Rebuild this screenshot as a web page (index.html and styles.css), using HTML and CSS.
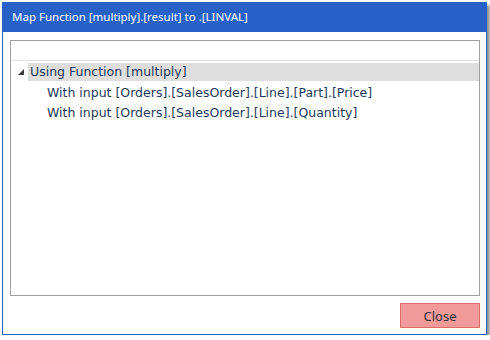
FILE: index.html
```html
<!DOCTYPE html>
<html lang="en">
<head>
    <meta charset="UTF-8">
    <title>Map Function</title>
    <link rel="stylesheet" href="styles.css">
</head>
<body>
<div class="window">
    <div class="titlebar">Map Function [multiply].[result] to .[LINVAL]</div>
    <div class="body">
        <div class="panel">
            <div class="panel-head"></div>
            <ul class="tree">
                <li class="node selected">
                    <span class="arrow"></span>
                    <span class="label">Using Function [multiply]</span>
                </li>
                <li class="node child">
                    <span class="label">With input [Orders].[SalesOrder].[Line].[Part].[Price]</span>
                </li>
                <li class="node child">
                    <span class="label">With input [Orders].[SalesOrder].[Line].[Quantity]</span>
                </li>
            </ul>
        </div>
        <div class="buttons">
            <button class="btn-close">Close</button>
        </div>
    </div>
</div>
</body>
</html>
```

FILE: styles.css
```css
* {
    margin: 0;
    padding: 0;
    box-sizing: border-box;
}

body {
    background: #fff;
    font: 12px "Noto Sans", "Open Sans", sans-serif;
}

.window {
    margin: 2px 0 0 2px;
    width: 485px;
    height: 333px;
    border: 1px solid #2862c9;
    border-top: 0;
    background: #fff;
    box-shadow: 3px 3px 3px rgba(0, 0, 0, 0.45);
}

.titlebar {
    height: 30px;
    margin: 0 -1px;
    padding-left: 10px;
    background: #2862c9;
    color: #fff;
    font-size: 11.5px;
    line-height: 30px;
}

.body {
    padding: 8px 6px 0 7px;
}

.panel {
    width: 470px;
    height: 256px;
    border: 1px solid #a0a0a0;
}

.panel-head {
    height: 20px;
    border-bottom: 1px solid #e2e2e2;
}

.tree {
    list-style: none;
    padding-top: 2px;
    font: 12.5px "DejaVu Sans", Verdana, sans-serif;
}

.node {
    display: flex;
    align-items: center;
    height: 20px;
    color: #1e395b;
}

.node .label {
    line-height: 18px;
}

.selected {
    height: 18px;
    margin-bottom: 2px;
    padding-left: 6px;
}

.selected .label {
    flex: 1;
    padding-left: 2px;
    background: #dedede;
}

.arrow {
    width: 11px;
    height: 18px;
    position: relative;
}

.arrow::after {
    content: "";
    position: absolute;
    left: 1px;
    top: 6px;
    border-style: solid;
    border-width: 0 0 6px 6px;
    border-color: transparent transparent #3c3c3c transparent;
}

.child {
    padding-left: 36px;
}

.buttons {
    display: flex;
    justify-content: flex-end;
    padding-top: 7px;
}

.btn-close {
    width: 80px;
    height: 25px;
    background: #f09a9a;
    border: 1px solid #e06a6a;
    color: #333;
    font: 13px "Noto Sans", "Open Sans", sans-serif;
}
```
